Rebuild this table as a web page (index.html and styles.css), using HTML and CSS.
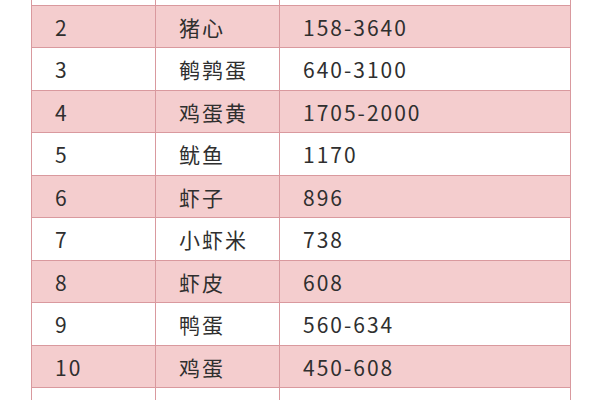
FILE: index.html
```html
<!DOCTYPE html>
<html lang="zh">
<head>
<meta charset="utf-8">
<link rel="stylesheet" href="styles.css">
</head>
<body>
<div class="wrap">
<table class="tbl">
<colgroup><col class="c1"><col class="c2"><col class="c3"></colgroup>
<tbody>
<tr class="w"><td>1</td><td>猪脑</td><td>2571</td></tr>
<tr class="p"><td>2</td><td>猪心</td><td>158-3640</td></tr>
<tr class="w"><td>3</td><td>鹌鹑蛋</td><td>640-3100</td></tr>
<tr class="p"><td>4</td><td>鸡蛋黄</td><td>1705-2000</td></tr>
<tr class="w"><td>5</td><td>鱿鱼</td><td>1170</td></tr>
<tr class="p"><td>6</td><td>虾子</td><td>896</td></tr>
<tr class="w"><td>7</td><td>小虾米</td><td>738</td></tr>
<tr class="p"><td>8</td><td>虾皮</td><td>608</td></tr>
<tr class="w"><td>9</td><td>鸭蛋</td><td>560-634</td></tr>
<tr class="p"><td>10</td><td>鸡蛋</td><td>450-608</td></tr>
<tr class="w"><td>11</td><td>鱼肝油</td><td>500</td></tr>
</tbody>
</table>
</div>
</body>
</html>
```
FILE: styles.css
```css
html, body { margin: 0; padding: 0; background: #fff; }
body { width: 600px; height: 400px; overflow: hidden; }
.wrap { padding-left: 31px; margin-top: -38px; }
.tbl {
  border-collapse: collapse;
  table-layout: fixed;
  width: 539px;
  font-family: "Noto Sans CJK SC", "Noto Sans", sans-serif;
  font-size: 21px;
  letter-spacing: 2px;
  color: #2f2f2f;
}
.c1 { width: 124px; }
.c2 { width: 124px; }
.c3 { width: 291px; }
.tbl td {
  height: 39.5px;
  padding: 2px 0 0 23px;
  border: 1.5px solid #d9999e;
  line-height: 1;
  vertical-align: middle;
  white-space: nowrap;
}
.tbl tr.p td { background: #f4cdce; }
.tbl tr.w td { background: #ffffff; }
```
